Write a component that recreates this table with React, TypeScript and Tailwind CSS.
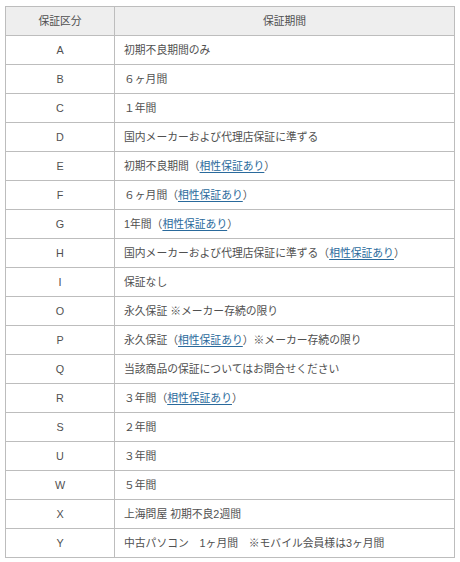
const Link = ({ children }: { children: React.ReactNode }) => (
  <a href="#" className="text-[#2a6a9c] underline underline-offset-2">{children}</a>
);

const data: [string, React.ReactNode][] = [
  ["A", "初期不良期間のみ"],
  ["B", "６ヶ月間"],
  ["C", "１年間"],
  ["D", "国内メーカーおよび代理店保証に準ずる"],
  ["E", <>初期不良期間（<Link>相性保証あり</Link>）</>],
  ["F", <>６ヶ月間（<Link>相性保証あり</Link>）</>],
  ["G", <>1年間（<Link>相性保証あり</Link>）</>],
  ["H", <>国内メーカーおよび代理店保証に準ずる（<Link>相性保証あり</Link>）</>],
  ["I", "保証なし"],
  ["O", "永久保証 ※メーカー存続の限り"],
  ["P", <>永久保証（<Link>相性保証あり</Link>）※メーカー存続の限り</>],
  ["Q", "当該商品の保証についてはお問合せください"],
  ["R", <>３年間（<Link>相性保証あり</Link>）</>],
  ["S", "２年間"],
  ["U", "３年間"],
  ["W", "５年間"],
  ["X", "上海問屋 初期不良2週間"],
  ["Y", "中古パソコン　1ヶ月間　※モバイル会員様は3ヶ月間"],
];

export default function App() {
  return (
    <div className="bg-white px-[5px] pt-[6px] text-[10.8px] text-[#505050] font-['Liberation_Sans','Noto_Sans_CJK_JP',sans-serif]">
      <table className="w-[450px] border-collapse border border-[#bdbdbd]">
        <thead>
          <tr className="h-[29px] bg-[#eeeeee]">
            <th className="w-[109px] border border-[#bdbdbd] font-normal text-center">保証区分</th>
            <th className="border border-[#bdbdbd] font-normal text-center">保証期間</th>
          </tr>
        </thead>
        <tbody>
          {data.map(([k, v]) => (
            <tr key={k} className="h-[29px]">
              <td className="border border-[#bdbdbd] text-center">{k}</td>
              <td className="border border-[#bdbdbd] pl-[9px]">{v}</td>
            </tr>
          ))}
        </tbody>
      </table>
    </div>
  );
}
